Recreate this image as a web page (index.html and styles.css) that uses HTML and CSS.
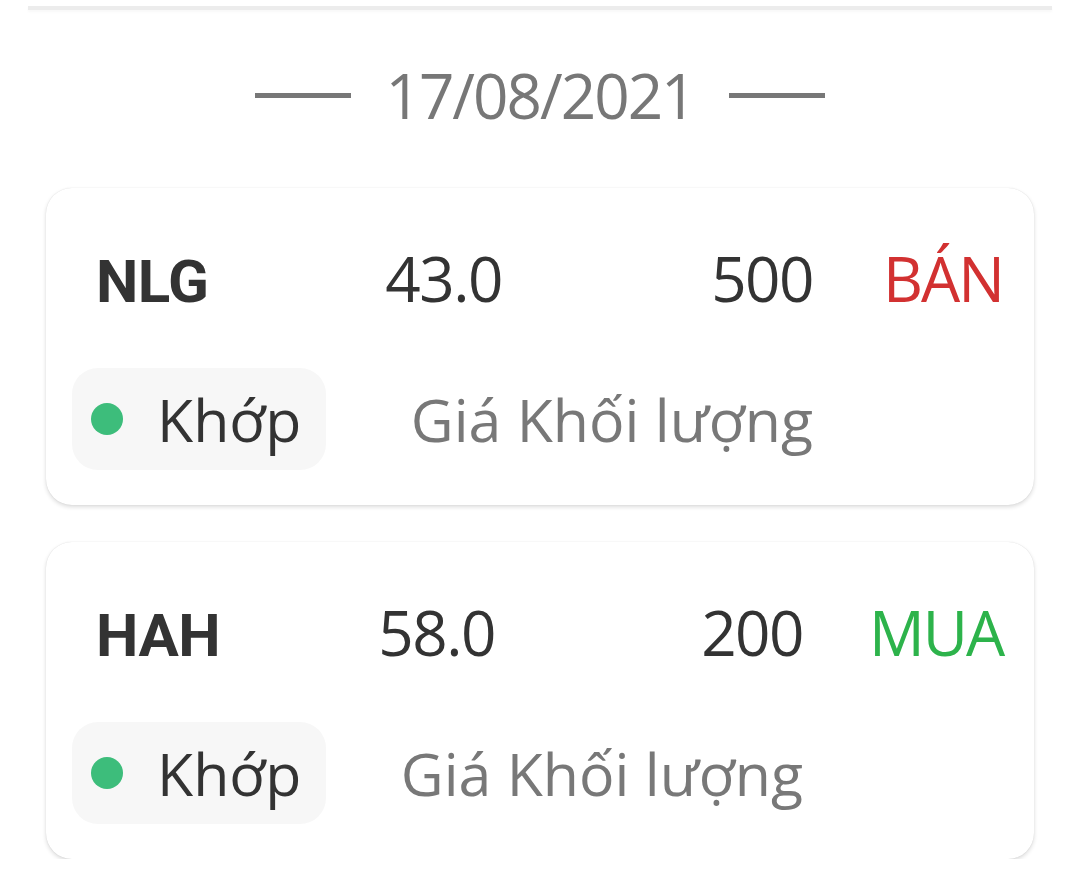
FILE: index.html
```html
<!DOCTYPE html>
<html lang="vi">
<head>
<meta charset="utf-8">
<title>Lệnh đã khớp</title>
<link rel="stylesheet" href="styles.css">
</head>
<body>
<div class="page">
  <div class="top-edge"></div>
  <div class="date-divider">
    <span class="dash"></span>
    <span class="date">17/08/2021</span>
    <span class="dash"></span>
  </div>
  <div class="order-list">
    <article class="order order--nlg">
      <span class="symbol">NLG</span>
      <span class="price">43.0</span>
      <span class="volume">500</span>
      <span class="side side--sell">BÁN</span>
      <span class="status"><span class="status-dot"></span><span class="status-text">Khớp</span></span>
      <span class="labels">Giá Khối lượng</span>
    </article>
    <article class="order order--hah">
      <span class="symbol">HAH</span>
      <span class="price">58.0</span>
      <span class="volume">200</span>
      <span class="side side--buy">MUA</span>
      <span class="status"><span class="status-dot"></span><span class="status-text">Khớp</span></span>
      <span class="labels">Giá Khối lượng</span>
    </article>
  </div>
</div>
</body>
</html>
```

FILE: styles.css
```css
* {
  box-sizing: border-box;
}

html,
body {
  margin: 0;
  background: #ffffff;
}

body {
  font-family: "Open Sans", "Noto Sans", sans-serif;
  color: #333333;
}

.top-edge {
  height: 4px;
  margin: 6px 28px 0;
  background: #ececec;
  box-shadow: 0 2px 3px rgba(0, 0, 0, 0.03);
}

.date-divider {
  display: flex;
  justify-content: center;
  align-items: center;
  gap: 34px;
  height: 84px;
  margin-top: 43px;
}

.dash {
  width: 96px;
  height: 5px;
  background: #777777;
}

.date {
  font-size: 62px;
  line-height: 84px;
  letter-spacing: -2px;
  color: #777777;
}

.order-list {
  display: flex;
  flex-direction: column;
  gap: 37px;
  margin: 51px 46px 0;
}

.order {
  display: grid;
  grid-template-rows: 80px 102px;
  row-gap: 50px;
  align-items: center;
  padding: 50px 26px 35px;
  background: #ffffff;
  border-radius: 26px;
  box-shadow: 0 2px 4px rgba(0, 0, 0, 0.14), 0 0 1px rgba(0, 0, 0, 0.14);
}

.order--nlg {
  grid-template-columns: 300px 130px 311px 1fr;
}

.order--hah {
  grid-template-columns: 300px 123px 308px 1fr;
}

.symbol,
.price,
.volume,
.side {
  grid-row: 1;
  align-self: baseline;
  line-height: 80px;
  white-space: nowrap;
}

.symbol {
  padding-left: 24px;
  font-family: Roboto, "Liberation Sans", sans-serif;
  font-weight: 700;
  font-size: 60px;
  letter-spacing: -0.5px;
  color: #333333;
}

.price,
.volume {
  text-align: right;
  font-size: 62px;
  letter-spacing: -1.5px;
}

.side {
  font-size: 62px;
  letter-spacing: -2px;
}

.order--nlg .side {
  padding-left: 70px;
}

.order--hah .side {
  padding-left: 66px;
}

.side--sell {
  color: #d23131;
}

.side--buy {
  color: #2db34b;
}

.status {
  grid-row: 2;
  grid-column: 1;
  justify-self: start;
  display: flex;
  align-items: center;
  gap: 34px;
  height: 102px;
  padding: 0 25px 0 19px;
  background: #f7f7f7;
  border-radius: 26px;
}

.status-dot {
  width: 32px;
  height: 32px;
  border-radius: 50%;
  background: #3dbd7b;
}

.status-text {
  font-size: 59px;
  line-height: 80px;
  color: #333333;
}

.labels {
  grid-row: 2;
  grid-column: 2 / 4;
  text-align: right;
  font-size: 59px;
  line-height: 80px;
  white-space: nowrap;
  color: #787878;
}
```
